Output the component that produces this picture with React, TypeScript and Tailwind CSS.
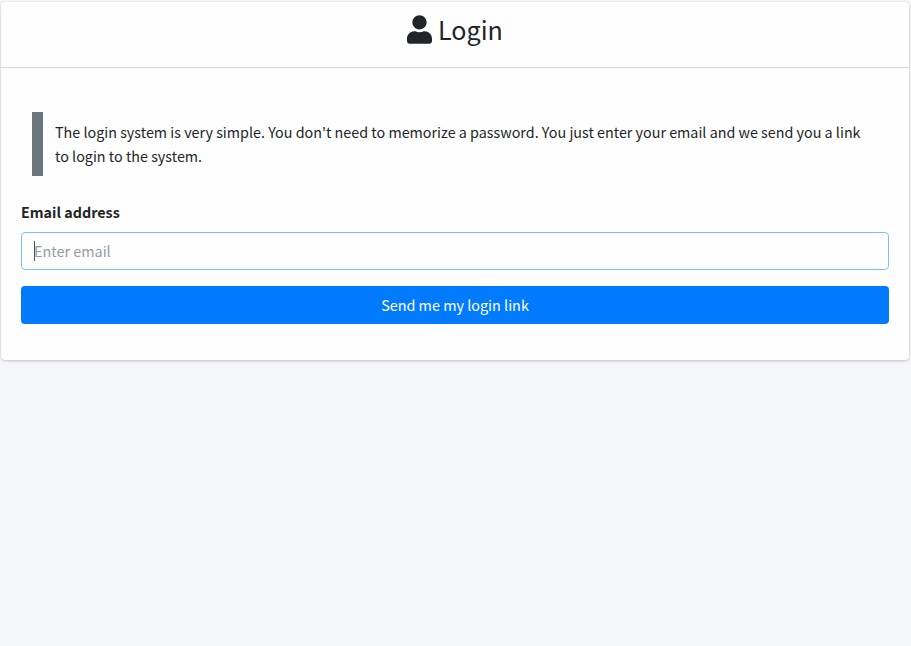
import { FaUser } from "react-icons/fa";

export default function App() {
  return (
    <div className="min-h-screen bg-[#f4f6f9] pl-px pr-[2px] pt-[2px] font-['Source_Sans_Pro','Noto_Sans_CJK_SC',sans-serif] text-[14.4px] leading-6 text-[#212529]">
      <main className="h-[358px] rounded bg-[#fefefe] shadow-[0_0_1px_rgba(0,0,0,0.125),0_1px_3px_rgba(0,0,0,0.2)]">
        <header className="flex h-[66px] items-start justify-center gap-[6px] border-b border-black/15 pt-[13px]">
          <FaUser className="h-[29px] w-[25px]" />
          <h1 className="whitespace-nowrap text-[25.1px] leading-[29px]">Login</h1>
        </header>
        <section className="px-5 pt-[44px]">
          <blockquote className="ml-[11px] h-16 border-l-[11px] border-[#6c757d] pl-3 pt-2 text-[14.33px]">
            <p className="whitespace-nowrap">The login system is very simple. You don't need to memorize a password. You just enter your email and we send you a link</p>
            <p>to login to the system.</p>
          </blockquote>
          <label className="mt-6 block h-8 text-[14.33px] font-bold">Email address</label>
          <div className="flex h-[38px] items-center rounded border border-[#80bdff] pl-3">
            <span className="-mr-px h-5 w-px bg-[#495057]" />
            <span className="text-[#939ba2]">Enter email</span>
          </div>
          <button className="mt-4 h-[38px] w-full rounded bg-[#007bff] text-white">Send me my login link</button>
        </section>
      </main>
    </div>
  );
}
